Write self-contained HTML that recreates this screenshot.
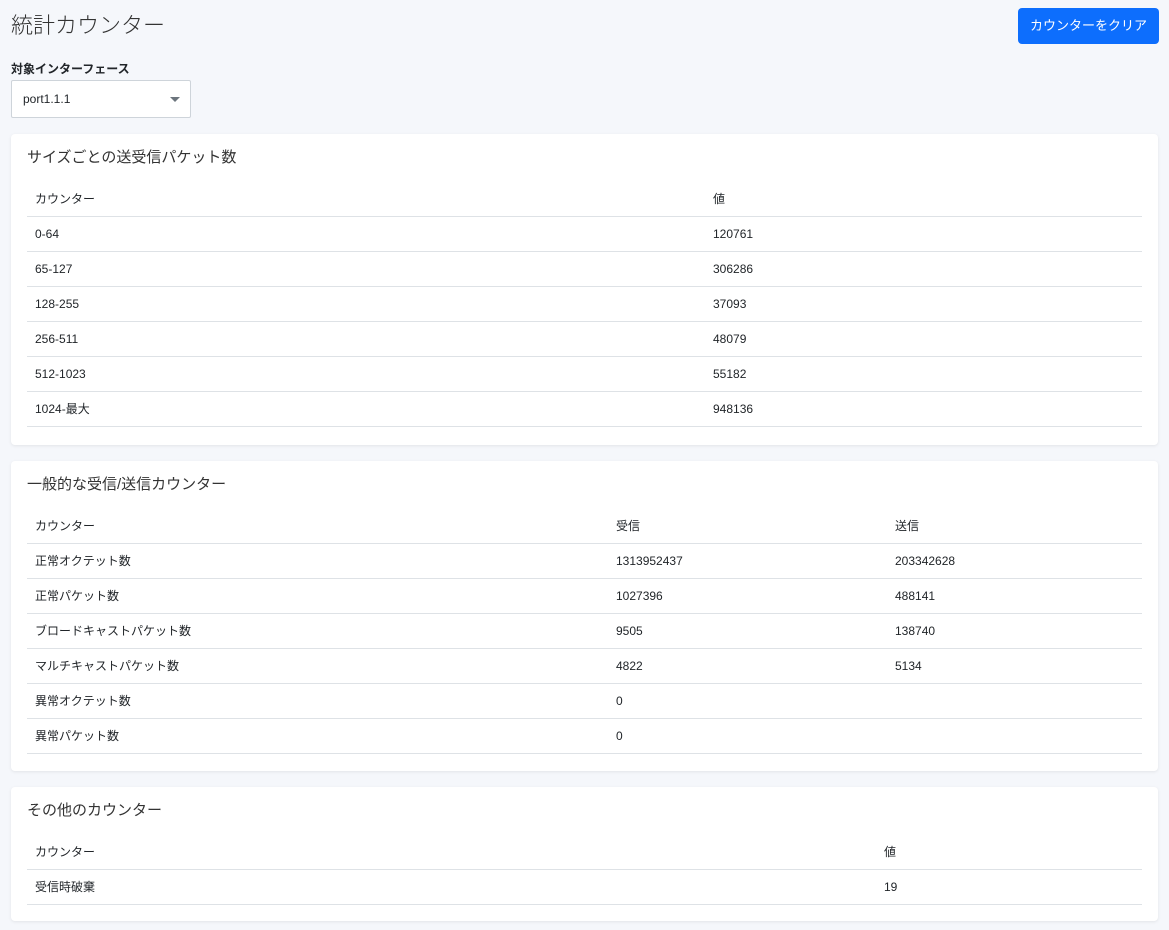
<!DOCTYPE html>
<html><head><meta charset="utf-8"><style>
*{box-sizing:border-box;margin:0;padding:0}
body{width:1169px;height:930px;background:#f5f7fb;font-family:"Liberation Sans","Noto Sans CJK JP",sans-serif;color:#212529;position:relative;overflow:hidden}
h1{position:absolute;left:11px;top:12px;font-size:22px;font-weight:300;color:#333;line-height:28px}
.btn{position:absolute;left:1018px;top:8px;width:141px;height:36px;background:#0d6efd;color:#fff;border-radius:4px;font-size:13px;line-height:36px;text-align:center}
.lbl{position:absolute;left:11px;top:60px;font-size:12px;font-weight:bold;line-height:18px}
.sel{position:absolute;left:11px;top:80px;width:180px;height:38px;background:#fff;border:1px solid #ced4da;border-radius:2px;font-size:12px;line-height:36px;padding-left:11px}
.sel:after{content:"";position:absolute;right:10px;top:16px;border-left:5px solid transparent;border-right:5px solid transparent;border-top:5px solid #6c757d}
.card{position:absolute;left:11px;width:1147px;background:#fff;border-radius:4px;box-shadow:0 1px 3px rgba(0,0,0,.08);padding:13px 16px 17px}
.card h2{font-size:15px;font-weight:400;line-height:22px;margin-bottom:12px;color:#333}
table{width:100%;border-collapse:collapse;font-size:12px}
td{height:35px;padding:0 8px;border-bottom:1px solid #dee2e6;vertical-align:middle}
</style></head><body>
<h1>統計カウンター</h1>
<div class="btn">カウンターをクリア</div>
<div class="lbl">対象インターフェース</div>
<div class="sel">port1.1.1</div>
<div class="card" style="top:134px;height:311px"><h2>サイズごとの送受信パケット数</h2>
<table><colgroup><col style="width:678px"><col></colgroup>
<tr><td>カウンター</td><td>値</td></tr>
<tr><td>0-64</td><td>120761</td></tr>
<tr><td>65-127</td><td>306286</td></tr>
<tr><td>128-255</td><td>37093</td></tr>
<tr><td>256-511</td><td>48079</td></tr>
<tr><td>512-1023</td><td>55182</td></tr>
<tr><td>1024-最大</td><td>948136</td></tr>
</table></div>
<div class="card" style="top:461px;height:310px"><h2>一般的な受信/送信カウンター</h2>
<table><colgroup><col style="width:581px"><col style="width:279px"><col></colgroup>
<tr><td>カウンター</td><td>受信</td><td>送信</td></tr>
<tr><td>正常オクテット数</td><td>1313952437</td><td>203342628</td></tr>
<tr><td>正常パケット数</td><td>1027396</td><td>488141</td></tr>
<tr><td>ブロードキャストパケット数</td><td>9505</td><td>138740</td></tr>
<tr><td>マルチキャストパケット数</td><td>4822</td><td>5134</td></tr>
<tr><td>異常オクテット数</td><td>0</td><td></td></tr>
<tr><td>異常パケット数</td><td>0</td><td></td></tr>
</table></div>
<div class="card" style="top:787px;height:134px"><h2>その他のカウンター</h2>
<table><colgroup><col style="width:849px"><col></colgroup>
<tr><td>カウンター</td><td>値</td></tr>
<tr><td>受信時破棄</td><td>19</td></tr>
</table></div>
</body></html>
